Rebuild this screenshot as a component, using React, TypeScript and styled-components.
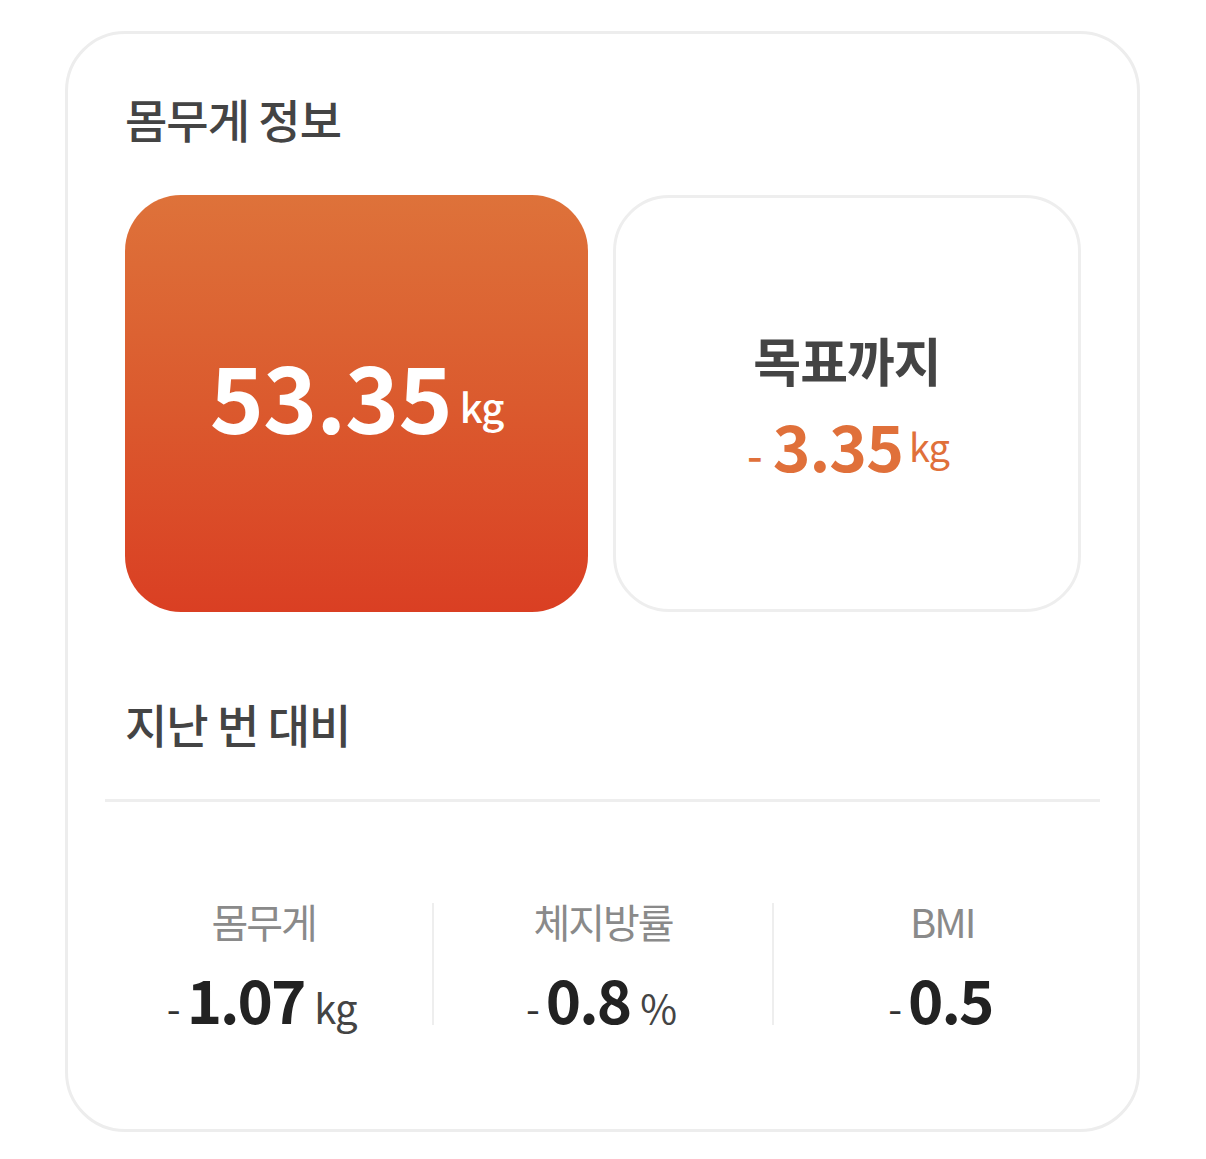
import React from "react";
import styled, { createGlobalStyle } from "styled-components";

const Global = createGlobalStyle`
  html, body { margin: 0; padding: 0; background: #ffffff; }
  body { font-family: "Noto Sans CJK KR", "Noto Sans", sans-serif; }
  * { box-sizing: border-box; }
`;

const Page = styled.div`
  padding: 31px 0 0 65px;
`;

const Card = styled.section`
  width: 1075px;
  height: 1101px;
  border: 3px solid #ededed;
  border-radius: 60px;
  padding: 0 57px;
  background: #fff;
`;

const Header = styled.div`
  height: 161px;
  padding-top: 61px;
`;

const SectionTitle = styled.h2<{ $top?: number }>`
  margin: ${(p) => p.$top ?? 0}px 0 0 0;
  font-size: 46px;
  line-height: 46px;
  font-weight: 500;
  color: #444444;
  letter-spacing: -1px;
`;

const Boxes = styled.div`
  display: grid;
  grid-template-columns: 463px 468px;
  gap: 25px;
  height: 417px;
`;

const CurrentBox = styled.div`
  border-radius: 56px;
  background: linear-gradient(180deg, #de723a 0%, #db5a2e 50%, #da3f23 100%);
  display: flex;
  align-items: center;
  justify-content: center;
  padding-bottom: 20px;
`;

const GoalBox = styled.div`
  border-radius: 56px;
  border: 3px solid #eeeeee;
  display: flex;
  flex-direction: column;
  align-items: center;
  justify-content: center;
`;

const ValueLine = styled.div`
  white-space: nowrap;
  line-height: 1;
`;

const BigNumber = styled.span`
  font-size: 92px;
  font-weight: 700;
  color: #ffffff;
  letter-spacing: -1px;
`;

const Unit = styled.span<{ $size: number; $color: string; $gap: number; $raise: number; $weight?: number }>`
  font-size: ${(p) => p.$size}px;
  font-weight: ${(p) => p.$weight ?? 400};
  color: ${(p) => p.$color};
  margin-left: ${(p) => p.$gap}px;
  vertical-align: ${(p) => p.$raise}px;
  letter-spacing: -1px;
`;

const GoalLabel = styled.div`
  font-size: 52px;
  line-height: 56px;
  font-weight: 700;
  color: #444444;
  letter-spacing: -1px;
`;

const GoalValue = styled(ValueLine)`
  margin-top: 24px;
  padding-left: 2px;
`;

const Minus = styled.span<{ $size: number; $color: string; $gap: number; $weight?: number }>`
  font-size: ${(p) => p.$size}px;
  font-weight: ${(p) => p.$weight ?? 400};
  color: ${(p) => p.$color};
  margin-right: ${(p) => p.$gap}px;
`;

const GoalNumber = styled.span`
  font-size: 64px;
  font-weight: 700;
  color: #e0703a;
  letter-spacing: -1px;
`;

const Divider = styled.hr`
  margin: 53px -20px 0;
  border: none;
  height: 3px;
  background: #eeeeee;
`;

const Stats = styled.div`
  display: grid;
  grid-template-columns: repeat(3, 1fr);
  margin: 101px -31px 0 -32px;
`;

const Stat = styled.div<{ $divider: boolean }>`
  height: 122px;
  display: flex;
  flex-direction: column;
  align-items: center;
  border-left: ${(p) => (p.$divider ? "2px solid #eeeeee" : "2px solid transparent")};
`;

const StatLabel = styled.div`
  font-size: 40px;
  line-height: 40px;
  font-weight: 400;
  color: #8a8a8a;
  letter-spacing: -2px;
  margin-top: -2px;
`;

const StatValue = styled(ValueLine)`
  margin-top: 27px;
  padding-right: 4px;
`;

const StatNumber = styled.span`
  font-size: 60px;
  font-weight: 700;
  color: #222222;
  letter-spacing: -2px;
`;

const stats = [
  { label: "몸무게", value: "1.07", unit: "kg" },
  { label: "체지방률", value: "0.8", unit: "%" },
  { label: "BMI", value: "0.5", unit: "" },
];

export default function App() {
  return (
    <Page>
      <Global />
      <Card>
        <Header>
          <SectionTitle>몸무게 정보</SectionTitle>
        </Header>
        <Boxes>
          <CurrentBox>
            <ValueLine>
              <BigNumber>53.35</BigNumber>
              <Unit $size={40} $color="#ffffff" $gap={8} $raise={11} $weight={500}>kg</Unit>
            </ValueLine>
          </CurrentBox>
          <GoalBox>
            <GoalLabel>목표까지</GoalLabel>
            <GoalValue>
              <Minus $size={44} $color="#e0703a" $gap={10} $weight={500}>-</Minus>
              <GoalNumber>3.35</GoalNumber>
              <Unit $size={38} $color="#e0703a" $gap={6} $raise={10}>kg</Unit>
            </GoalValue>
          </GoalBox>
        </Boxes>
        <SectionTitle $top={88}>지난 번 대비</SectionTitle>
        <Divider />
        <Stats>
          {stats.map((s, i) => (
            <Stat key={s.label} $divider={i > 0}>
              <StatLabel>{s.label}</StatLabel>
              <StatValue>
                <Minus $size={40} $color="#333333" $gap={6}>-</Minus>
                <StatNumber>{s.value}</StatNumber>
                {s.unit && (
                  <Unit $size={40} $color="#444444" $gap={10} $raise={0}>{s.unit}</Unit>
                )}
              </StatValue>
            </Stat>
          ))}
        </Stats>
      </Card>
    </Page>
  );
}
